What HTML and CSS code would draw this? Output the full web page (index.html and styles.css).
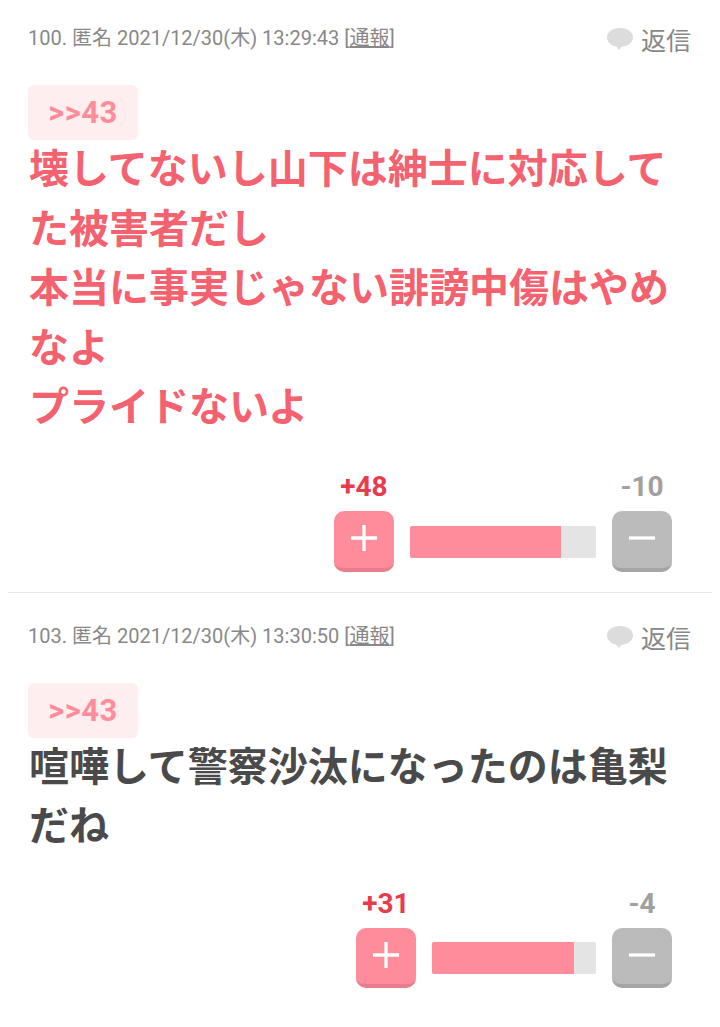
FILE: index.html
```html
<!DOCTYPE html>
<html lang="ja">
<head>
  <meta charset="UTF-8">
  <title>コメント</title>
  <link rel="stylesheet" href="styles.css">
</head>
<body>

  <div class="comment comment-first">
    <div class="comment-head">
      <div class="meta">100. 匿名 2021/12/30(木) 13:29:43 [<span class="report">通報</span>]</div>
      <div class="reply">
        <svg class="reply-icon" viewBox="0 0 26 24"><path d="M13 1C6 1 0 4.800 0 10.500c0 4.600 3.800 8 9 9l3 3.500 2.500-3.300C21 19.300 26 15.600 26 10.500 26 4.800 20 1 13 1z"/></svg>
        返信
      </div>
    </div>
    <div class="anchor">&gt;&gt;43</div>
    <div class="body body-hot">壊してないし山下は紳士に対応してた被害者だし<br>本当に事実じゃない誹謗中傷はやめなよ<br>プライドないよ</div>
    <div class="votes">
      <div class="vote">
        <div class="count count-plus">+48</div>
        <div class="btn btn-plus"><svg viewBox="0 0 30 30"><path d="M15 1v28M1 15h28"/></svg></div>
      </div>
      <div class="bar bar-wide"><div class="bar-fill" style="width: 81.2%"></div></div>
      <div class="vote">
        <div class="count count-minus">-10</div>
        <div class="btn btn-minus"><svg viewBox="0 0 30 30"><path d="M1 15h28"/></svg></div>
      </div>
    </div>
  </div>

  <div class="comment comment-last">
    <div class="comment-head">
      <div class="meta">103. 匿名 2021/12/30(木) 13:30:50 [<span class="report">通報</span>]</div>
      <div class="reply">
        <svg class="reply-icon" viewBox="0 0 26 24"><path d="M13 1C6 1 0 4.800 0 10.500c0 4.600 3.800 8 9 9l3 3.500 2.500-3.300C21 19.300 26 15.600 26 10.500 26 4.800 20 1 13 1z"/></svg>
        返信
      </div>
    </div>
    <div class="anchor">&gt;&gt;43</div>
    <div class="body">喧嘩して警察沙汰になったのは亀梨だね</div>
    <div class="votes">
      <div class="vote">
        <div class="count count-plus">+31</div>
        <div class="btn btn-plus"><svg viewBox="0 0 30 30"><path d="M15 1v28M1 15h28"/></svg></div>
      </div>
      <div class="bar bar-narrow"><div class="bar-fill" style="width: 86.6%"></div></div>
      <div class="vote">
        <div class="count count-minus">-4</div>
        <div class="btn btn-minus"><svg viewBox="0 0 30 30"><path d="M1 15h28"/></svg></div>
      </div>
    </div>
  </div>

</body>
</html>
```

FILE: styles.css
```css
body {
  margin: 0;
  background: #fff;
  font-family: Roboto, "Noto Sans CJK JP", sans-serif;
  color: #4a4a4a;
}

.comment {
  margin: 0 8px;
  padding: 23px 40px 20px 20px;
  border-bottom: 1px solid #e8e8e8;
}

.comment-first {
  margin-top: -5px;
}

.comment-last {
  border-bottom: none;
}

.comment-last .votes {
  margin-top: 32px;
}

.comment-last .btn {
  height: 60px;
}

.comment-head {
  display: flex;
  align-items: center;
  justify-content: space-between;
  height: 42px;
  margin-right: -19px;
}

.meta {
  margin-bottom: 5px;
  font-size: 20px;
  color: #888;
}

.report {
  text-decoration: underline;
}

.reply {
  display: flex;
  align-items: center;
  gap: 8px;
  font-size: 25px;
  color: #888;
}

.reply-icon {
  width: 26px;
  height: 24px;
  fill: #dcdcdc;
}

.anchor {
  width: 110px;
  height: 55px;
  margin-top: 25px;
  border-radius: 6px;
  background: #ffeef0;
  color: #ff8c9a;
  font-size: 31px;
  font-weight: 700;
  letter-spacing: 0.5px;
  line-height: 55px;
  text-align: center;
}

.body {
  margin-right: -10px;
  padding-left: 1px;
  font-size: 40px;
  font-weight: 700;
  line-height: 59.5px;
}

.body-hot {
  color: #f4616f;
}

.votes {
  display: flex;
  justify-content: flex-end;
  align-items: flex-end;
  gap: 16px;
  margin-top: 34px;
}

.vote {
  width: 60px;
  text-align: center;
}

.count {
  font-size: 28px;
  font-weight: 700;
  line-height: 30px;
  margin: 0 -10px 9px;
}

.count-plus {
  color: #e63c4c;
}

.count-minus {
  color: #a0a0a0;
}

.btn {
  display: flex;
  align-items: center;
  justify-content: center;
  box-sizing: border-box;
  width: 60px;
  height: 61px;
  border-radius: 10px;
  padding-bottom: 2px;
}

.btn svg {
  width: 28px;
  height: 28px;
  stroke: #fff;
  stroke-width: 3.500;
  fill: none;
}

.btn-plus {
  background: #ff8c9a;
  border-bottom: 4px solid #e87e8b;
}

.btn-minus {
  background: #bbb;
  border-bottom: 4px solid #a5a5a5;
}

.bar {
  height: 32px;
  margin-bottom: 14px;
  background: #e4e4e4;
  border-radius: 2px;
  overflow: hidden;
}

.bar-wide {
  width: 186px;
}

.bar-narrow {
  width: 164px;
}

.bar-fill {
  height: 100%;
  background: #ff8c9a;
}
```
